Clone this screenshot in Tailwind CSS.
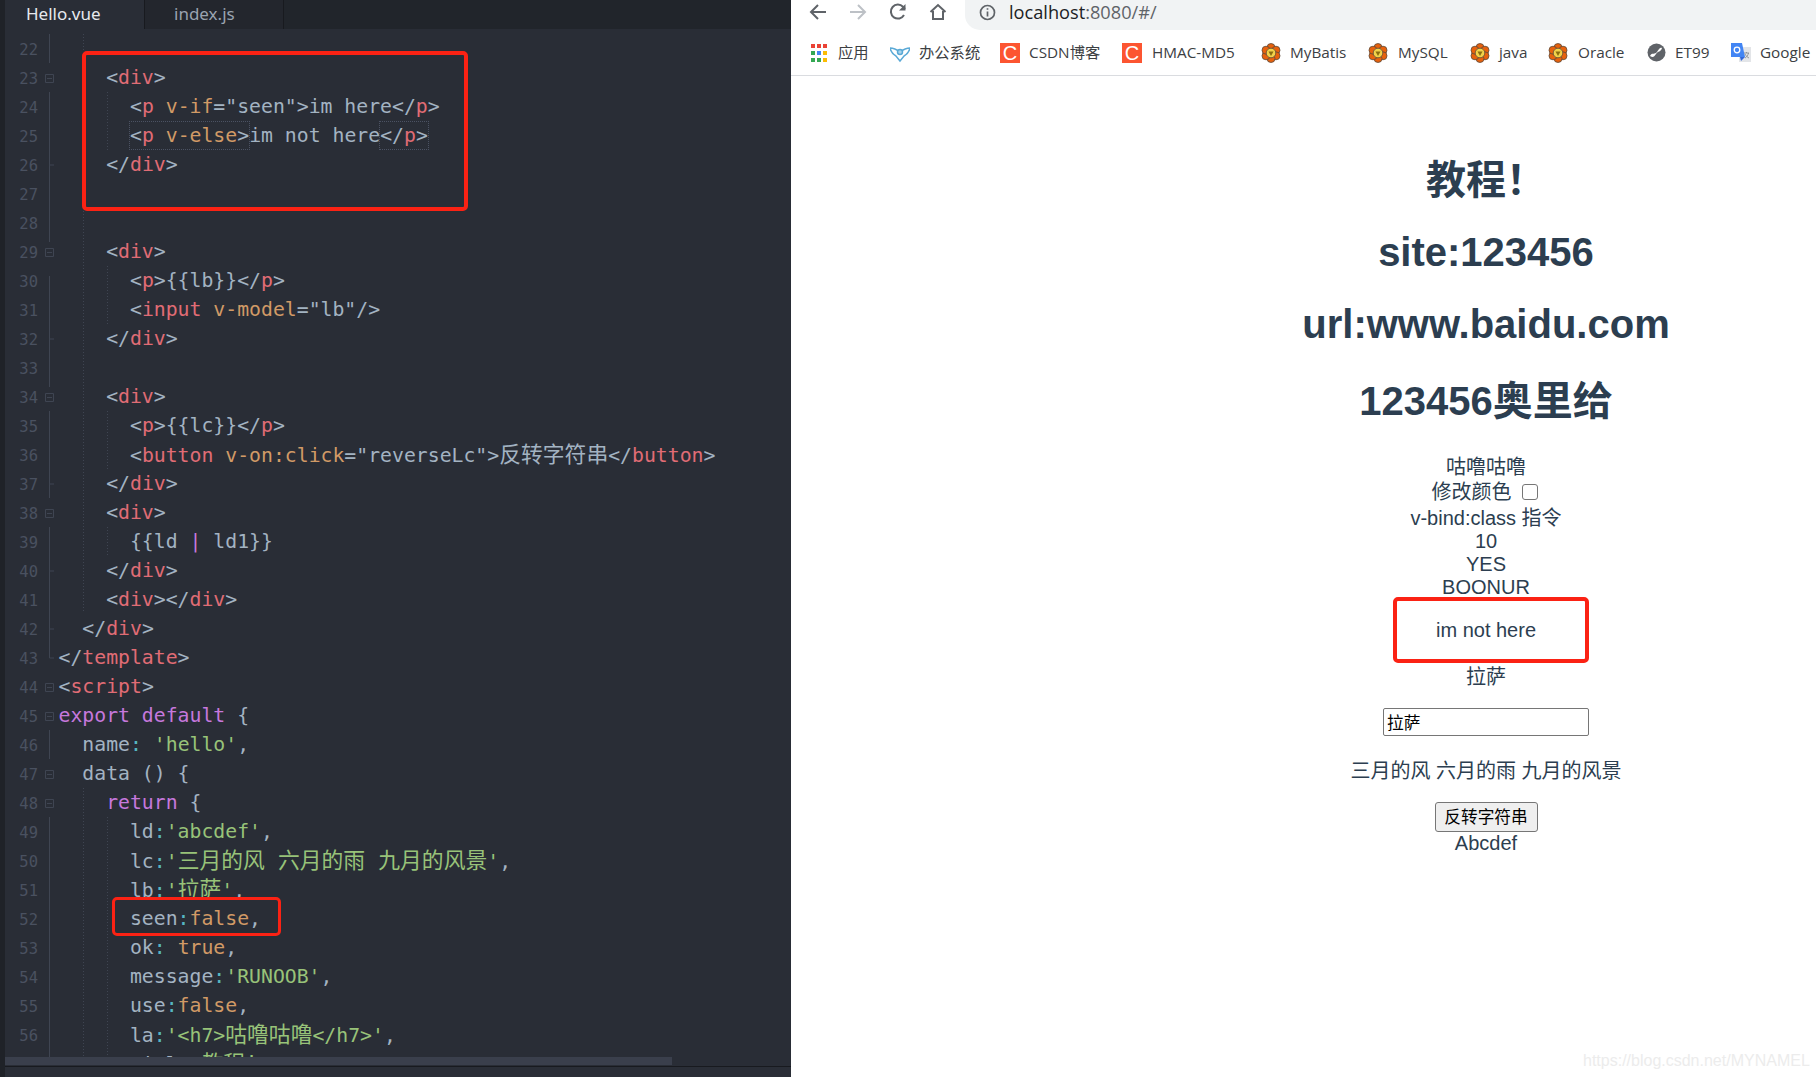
<!DOCTYPE html>
<html lang="zh">
  <head>
    <meta charset="UTF-8" />
    <title>Hello.vue</title>
    <script src="https://cdn.jsdelivr.net/npm/@tailwindcss/browser@4"></script>
  </head>
  <body class="w-[1816px] h-[1077px] flex overflow-hidden bg-white">
    <!-- Editor -->
    <section class="relative w-[791px] h-full flex flex-col bg-[#292d36] border-l-[5px] border-[#1f2228] font-['DejaVu_Sans_Mono','Noto_Sans_CJK_SC',monospace] text-[19.8px] text-[#a3b3c2]">
      <div class="h-[29px] shrink-0 flex bg-[#21252b] font-['Noto_Sans','Noto_Sans_CJK_SC',sans-serif] text-[17px]">
        <div class="w-[139px] pl-[21px] bg-[#292d36] text-[#e6e9ee] leading-[27px]">Hello.vue</div>
        <div class="w-[140px] pl-[29px] bg-[#23262d] border-x border-[#181a1f] text-[#9aa3b0] leading-[27px]">index.js</div>
      </div>

      <div class="relative flex-1 overflow-hidden pt-[5px] flex leading-[29px]">
        <!-- line numbers -->
        <div class="w-[33px] shrink-0 pt-[2px] text-right text-[15.5px] text-[#4a5160] font-['DejaVu_Sans_Mono',monospace]">
          <div class="h-[29px]">22</div>
          <div class="h-[29px]">23</div>
          <div class="h-[29px]">24</div>
          <div class="h-[29px]">25</div>
          <div class="h-[29px]">26</div>
          <div class="h-[29px]">27</div>
          <div class="h-[29px]">28</div>
          <div class="h-[29px]">29</div>
          <div class="h-[29px]">30</div>
          <div class="h-[29px]">31</div>
          <div class="h-[29px]">32</div>
          <div class="h-[29px]">33</div>
          <div class="h-[29px]">34</div>
          <div class="h-[29px]">35</div>
          <div class="h-[29px]">36</div>
          <div class="h-[29px]">37</div>
          <div class="h-[29px]">38</div>
          <div class="h-[29px]">39</div>
          <div class="h-[29px]">40</div>
          <div class="h-[29px]">41</div>
          <div class="h-[29px]">42</div>
          <div class="h-[29px]">43</div>
          <div class="h-[29px]">44</div>
          <div class="h-[29px]">45</div>
          <div class="h-[29px]">46</div>
          <div class="h-[29px]">47</div>
          <div class="h-[29px]">48</div>
          <div class="h-[29px]">49</div>
          <div class="h-[29px]">50</div>
          <div class="h-[29px]">51</div>
          <div class="h-[29px]">52</div>
          <div class="h-[29px]">53</div>
          <div class="h-[29px]">54</div>
          <div class="h-[29px]">55</div>
          <div class="h-[29px]">56</div>
        </div>

        <!-- fold gutter -->
        <svg class="w-[22px] h-[1023px] shrink-0 mr-[-1.5px]" viewBox="0 0 22 1023" fill="none" stroke="#3f4552">
          <path d="M11.5 0V29M11.5 58V208M11.5 131H16M11.5 242V353M11.5 305H16M11.5 377V464M11.5 450H16M11.5 493V624H16M11.5 537H16M11.5 595H16M11.5 696V725M11.5 783V1023" />
          <path d="M7.5 40.5h8v8h-8zM7.5 214.5h8v8h-8zM7.5 359.5h8v8h-8zM7.5 475.5h8v8h-8zM7.5 649.5h8v8h-8zM7.5 678.5h8v8h-8zM7.5 736.5h8v8h-8zM7.5 765.5h8v8h-8zM9 44.5h5M9 218.5h5M9 363.5h5M9 479.5h5M9 653.5h5M9 682.5h5M9 740.5h5M9 769.5h5" />
        </svg>

        <!-- code -->
        <div class="relative [&>div]:whitespace-pre">
          <div class="h-[29px]"></div>
          <div class="h-[29px]">    &lt;<span class="text-[#e06c75]">div</span>&gt;</div>
          <div class="h-[29px]">      &lt;<span class="text-[#e06c75]">p</span> <span class="text-[#d19a66]">v-if</span>="seen"&gt;im here&lt;/<span class="text-[#e06c75]">p</span>&gt;</div>
          <div class="h-[29px]">      <span class="inline-block h-[27px] leading-[27px] outline outline-dotted outline-[#4b5263]">&lt;<span class="text-[#e06c75]">p</span> <span class="text-[#d19a66]">v-else</span>&gt;</span>im not here<span class="inline-block h-[27px] leading-[27px] outline outline-dotted outline-[#4b5263]">&lt;/<span class="text-[#e06c75]">p</span>&gt;</span></div>
          <div class="h-[29px]">    &lt;/<span class="text-[#e06c75]">div</span>&gt;</div>
          <div class="h-[29px]"></div>
          <div class="h-[29px]"></div>
          <div class="h-[29px]">    &lt;<span class="text-[#e06c75]">div</span>&gt;</div>
          <div class="h-[29px]">      &lt;<span class="text-[#e06c75]">p</span>&gt;{{lb}}&lt;/<span class="text-[#e06c75]">p</span>&gt;</div>
          <div class="h-[29px]">      &lt;<span class="text-[#e06c75]">input</span> <span class="text-[#d19a66]">v-model</span>="lb"/&gt;</div>
          <div class="h-[29px]">    &lt;/<span class="text-[#e06c75]">div</span>&gt;</div>
          <div class="h-[29px]"></div>
          <div class="h-[29px]">    &lt;<span class="text-[#e06c75]">div</span>&gt;</div>
          <div class="h-[29px]">      &lt;<span class="text-[#e06c75]">p</span>&gt;{{lc}}&lt;/<span class="text-[#e06c75]">p</span>&gt;</div>
          <div class="h-[29px]">      &lt;<span class="text-[#e06c75]">button</span> <span class="text-[#d19a66]">v-on:click</span>="reverseLc"&gt;<span class="text-[21.8px]">反转字符串</span>&lt;/<span class="text-[#e06c75]">button</span>&gt;</div>
          <div class="h-[29px]">    &lt;/<span class="text-[#e06c75]">div</span>&gt;</div>
          <div class="h-[29px]">    &lt;<span class="text-[#e06c75]">div</span>&gt;</div>
          <div class="h-[29px]">      {{ld <span class="text-[#c678dd]">|</span> ld1}}</div>
          <div class="h-[29px]">    &lt;/<span class="text-[#e06c75]">div</span>&gt;</div>
          <div class="h-[29px]">    &lt;<span class="text-[#e06c75]">div</span>&gt;&lt;/<span class="text-[#e06c75]">div</span>&gt;</div>
          <div class="h-[29px]">  &lt;/<span class="text-[#e06c75]">div</span>&gt;</div>
          <div class="h-[29px]">&lt;/<span class="text-[#e06c75]">template</span>&gt;</div>
          <div class="h-[29px]">&lt;<span class="text-[#e06c75]">script</span>&gt;</div>
          <div class="h-[29px]"><span class="text-[#c678dd]">export default</span> {</div>
          <div class="h-[29px]">  name<span class="text-[#56b6c2]">:</span> <span class="text-[#98c379]">'hello'</span>,</div>
          <div class="h-[29px]">  data () {</div>
          <div class="h-[29px]">    <span class="text-[#c678dd]">return</span> {</div>
          <div class="h-[29px]">      ld<span class="text-[#56b6c2]">:</span><span class="text-[#98c379]">'abcdef'</span>,</div>
          <div class="h-[29px]">      lc<span class="text-[#56b6c2]">:</span><span class="text-[#98c379]">'<span class="text-[21.8px]">三月的风 六月的雨 九月的风景</span>'</span>,</div>
          <div class="h-[29px]">      lb<span class="text-[#56b6c2]">:</span><span class="text-[#98c379]">'<span class="text-[21.8px]">拉萨</span>'</span>,</div>
          <div class="h-[29px]">      seen<span class="text-[#56b6c2]">:</span><span class="text-[#d19a66]">false</span>,</div>
          <div class="h-[29px]">      ok<span class="text-[#56b6c2]">:</span> <span class="text-[#d19a66]">true</span>,</div>
          <div class="h-[29px]">      message<span class="text-[#56b6c2]">:</span><span class="text-[#98c379]">'RUNOOB'</span>,</div>
          <div class="h-[29px]">      use<span class="text-[#56b6c2]">:</span><span class="text-[#d19a66]">false</span>,</div>
          <div class="h-[29px]">      la<span class="text-[#56b6c2]">:</span><span class="text-[#98c379]">'&lt;h7&gt;<span class="text-[21.8px]">咕噜咕噜</span>&lt;/h7&gt;'</span>,</div>
          <div class="h-[29px]">      titl<span class="text-[#56b6c2]">:</span><span class="text-[#98c379]">'<span class="text-[21.8px]">教程!</span>'</span>,</div>

          <!-- indent guides -->
          <svg class="absolute left-[1.5px] top-0 w-[60px] h-[1023px]" viewBox="0 0 60 1023" fill="none" stroke="#3f4552" stroke-dasharray="1 2">
            <path d="M23.5 0V18M23.5 177V578M23.5 754V1023M47.5 58V116M47.5 232V290M47.5 377V435M47.5 493V522M47.5 783V1023" />
          </svg>
        </div>
      </div>

      <!-- scrollbar -->
      <div class="h-[9px] shrink-0 bg-[#292d36]"><div class="w-[667px] h-[8px] bg-[#3a3f4c]"></div></div>
      <div class="h-[11px] shrink-0 bg-[#2a2e37] border-t border-[#181a1f]"></div>

      <!-- red marks -->
      <div class="absolute left-[77px] top-[51px] w-[386px] h-[160px] border-4 border-[#fb2214] rounded-[5px]"></div>
      <div class="absolute left-[107px] top-[897px] w-[169px] h-[39px] border-[3px] border-[#fb2214] rounded-[5px]"></div>
    </section>

    <!-- Browser -->
    <section class="relative flex-1 flex flex-col font-['Liberation_Sans','Noto_Sans_CJK_SC',sans-serif] text-[#2c3e50]">
      <header class="h-[76px] shrink-0 border-b border-[#dadce0]">
        <div class="h-[30px] flex items-start pl-[18px]">
          <svg class="w-[18px] h-[18px] mt-[3px]" viewBox="0 0 18 18" fill="none" stroke="#5f6368" stroke-width="2"><path d="M17 9H2M9 2 2 9l7 7" /></svg>
          <svg class="w-[18px] h-[18px] ml-[22px] mt-[3px]" viewBox="0 0 18 18" fill="none" stroke="#bdc1c6" stroke-width="2"><path d="M1 9h15M9 2l7 7-7 7" /></svg>
          <svg class="w-[18px] h-[18px] ml-[22px] mt-[3px]" viewBox="0 0 18 18" fill="none" stroke="#5f6368" stroke-width="2"><path d="M15 12a7 7 0 1 1-1-8.200L16 6" /><path d="M16.500 1v6.500H10" fill="#5f6368" stroke="none" /></svg>
          <svg class="w-[18px] h-[18px] ml-[22px] mt-[3px]" viewBox="0 0 18 18" fill="none" stroke="#5f6368" stroke-width="2"><path d="M1.500 9 9 2l7.500 7M4 8v8h10V8" /></svg>
          <div class="flex-1 ml-[18px] h-[30px] bg-[#f1f3f4] rounded-bl-[15px] flex items-start pl-[14px] font-['Open_Sans',sans-serif] text-[18.200px] leading-[24px] text-[#5f6368]">
            <svg class="w-[17px] h-[17px] mr-[13px] mt-[4px]" viewBox="0 0 17 17" fill="none" stroke="#5f6368" stroke-width="1.700"><circle cx="8.500" cy="8.500" r="7" /><path d="M8.500 7.500v5M8.500 4.200v1.600" /></svg>
            <span><span class="text-[#202124]">localhost</span>:8080/#/</span>
          </div>
        </div>
        <nav class="h-[45px] flex items-center pl-[20px] text-[15.300px] text-[#3c4043] font-['Open_Sans','Noto_Sans_CJK_SC',sans-serif]">
          <svg class="w-[16px] h-[18px]" viewBox="0 0 16 18">
            <path fill="#ea4335" d="M0 0h4v4H0zM6 0h4v4H6zM12 0h4v4h-4z" />
            <path fill="#34a853" d="M0 7h4v4H0z" /><path fill="#4285f4" d="M6 7h4v4H6z" /><path fill="#fbbc04" d="M12 7h4v4h-4z" />
            <path fill="#34a853" d="M0 14h4v4H0zM6 14h4v4H6z" /><path fill="#fbbc04" d="M12 14h4v4h-4z" />
          </svg>
          <span class="w-[52px] ml-[11px]">应用</span>
          <svg class="w-[20px] h-[20px]" viewBox="0 0 20 20" fill="none" stroke="#5aa9d6" stroke-width="1.500"><path d="M0 5c3 0 6 1 10 4 4-3 7-4 10-4-1 4-4 7-6 8l-4 5-4-5C4 12 1 9 0 5z" /><circle cx="10" cy="9" r="2.500" fill="#a8d4ec" /></svg>
          <span class="w-[81px] ml-[9px]">办公系统</span>
          <span class="w-[20px] h-[20px] bg-[#fc5531] text-white text-[20px] leading-[20px] text-center font-['Liberation_Sans']">C</span>
          <span class="w-[93px] ml-[9px]">CSDN博客</span>
          <span class="w-[20px] h-[20px] bg-[#fc5531] text-white text-[20px] leading-[20px] text-center font-['Liberation_Sans']">C</span>
          <span class="w-[109px] ml-[10px]">HMAC-MD5</span>
          <svg class="w-[20px] h-[20px]" viewBox="0 0 20 20" fill="#e8610c" stroke="#5a4a3a" stroke-width=".8"><circle cx="10" cy="4.500" r="4" /><circle cx="15" cy="7.200" r="4" /><circle cx="15" cy="12.800" r="4" /><circle cx="10" cy="15.500" r="4" /><circle cx="5" cy="12.800" r="4" /><circle cx="5" cy="7.200" r="4" /><circle cx="10" cy="10" r="4.800" fill="#f2d24a" /><path d="M7.500 8.500h5L10 13z" fill="#8a6d10" stroke="none" /></svg>
          <span class="w-[78px] ml-[9px]">MyBatis</span>
          <svg class="w-[20px] h-[20px]" viewBox="0 0 20 20" fill="#e8610c" stroke="#5a4a3a" stroke-width=".8"><circle cx="10" cy="4.500" r="4" /><circle cx="15" cy="7.200" r="4" /><circle cx="15" cy="12.800" r="4" /><circle cx="10" cy="15.500" r="4" /><circle cx="5" cy="12.800" r="4" /><circle cx="5" cy="7.200" r="4" /><circle cx="10" cy="10" r="4.800" fill="#f2d24a" /><path d="M7.500 8.500h5L10 13z" fill="#8a6d10" stroke="none" /></svg>
          <span class="w-[72px] ml-[10px]">MySQL</span>
          <svg class="w-[20px] h-[20px]" viewBox="0 0 20 20" fill="#e8610c" stroke="#5a4a3a" stroke-width=".8"><circle cx="10" cy="4.500" r="4" /><circle cx="15" cy="7.200" r="4" /><circle cx="15" cy="12.800" r="4" /><circle cx="10" cy="15.500" r="4" /><circle cx="5" cy="12.800" r="4" /><circle cx="5" cy="7.200" r="4" /><circle cx="10" cy="10" r="4.800" fill="#f2d24a" /><path d="M7.500 8.500h5L10 13z" fill="#8a6d10" stroke="none" /></svg>
          <span class="w-[49px] ml-[9px]">java</span>
          <svg class="w-[20px] h-[20px]" viewBox="0 0 20 20" fill="#e8610c" stroke="#5a4a3a" stroke-width=".8"><circle cx="10" cy="4.500" r="4" /><circle cx="15" cy="7.200" r="4" /><circle cx="15" cy="12.800" r="4" /><circle cx="10" cy="15.500" r="4" /><circle cx="5" cy="12.800" r="4" /><circle cx="5" cy="7.200" r="4" /><circle cx="10" cy="10" r="4.800" fill="#f2d24a" /><path d="M7.500 8.500h5L10 13z" fill="#8a6d10" stroke="none" /></svg>
          <span class="w-[69px] ml-[10px]">Oracle</span>
          <svg class="w-[19px] h-[19px]" viewBox="0 0 19 19"><circle cx="9.500" cy="9.500" r="9" fill="#5f6368" /><path d="M3 13c2-4 5-1 7-4s3-5 5-4c-1 4-4 3-6 6s-3 4-6 2z" fill="#fff" /></svg>
          <span class="w-[56px] ml-[9px]">ET99</span>
          <svg class="w-[20px] h-[20px]" viewBox="0 0 20 20"><path fill="#e3e5e8" d="M8 4h12v15H8z" /><path fill="#4285f4" d="M0 0h11l3 14H0z" /><path fill="#3367d6" d="M9 14h5l-4 4z" /><circle cx="6" cy="7" r="2.800" fill="none" stroke="#fff" stroke-width="1.300" /><path d="M13 10h5M15.500 9v1M14 15c2-1 3-3 3.500-5M14 11c1 2 2 3 4 4" stroke="#80868b" stroke-width=".8" fill="none" /></svg>
          <span class="ml-[9px]">Google</span>
        </nav>
      </header>

      <!-- Page -->
      <main class="flex-1 flex flex-col items-center pl-[365px] text-[20px] leading-[23px] text-center">
        <h1 class="mt-[81px] text-[40px] leading-[46px] font-bold">教程！</h1>
        <h1 class="mt-[26px] text-[40px] leading-[46px] font-bold">site:123456</h1>
        <h1 class="mt-[26px] text-[40px] leading-[46px] font-bold">url:www.baidu.com</h1>
        <h1 class="mt-[29px] text-[40px] leading-[50px] font-bold">123456奥里给</h1>
        <p class="mt-[29px] leading-[24px]">咕噜咕噜</p>
        <p class="leading-[26px] pr-[3px] flex items-center gap-[10px]">修改颜色 <span class="w-[16px] h-[16px] border border-[#767676] rounded-[3px]"></span></p>
        <p class="leading-[25px] mt-[1px]">v-bind:class 指令</p>
        <p class="-mt-[1px]">10</p>
        <p class="leading-[22px]">YES</p>
        <p class="mt-[1px]">BOONUR</p>
        <p class="mt-[20px]">im not here</p>
        <p class="mt-[22px] leading-[26px]">拉萨</p>
        <input class="mt-[18px] w-[206px] h-[28px] px-[3px] border border-[#767676] rounded-[2px] text-[16.700px] text-black" value="拉萨" />
        <p class="mt-[22px] leading-[26px]">三月的风 六月的雨 九月的风景</p>
        <button class="mt-[18px] w-[103px] h-[30px] bg-[#efefef] border border-[#767676] rounded-[3px] text-[16.700px] text-black">反转字符串</button>
        <p>Abcdef</p>
      </main>

      <div class="absolute left-[792px] top-[1049px] text-[16px] text-[#ececec]">https://blog.csdn.net/MYNAMEL</div>
      <div class="absolute left-[602px] top-[597px] w-[196px] h-[66px] border-4 border-[#fb2214] rounded-[5px]"></div>
    </section>
  </body>
</html>
